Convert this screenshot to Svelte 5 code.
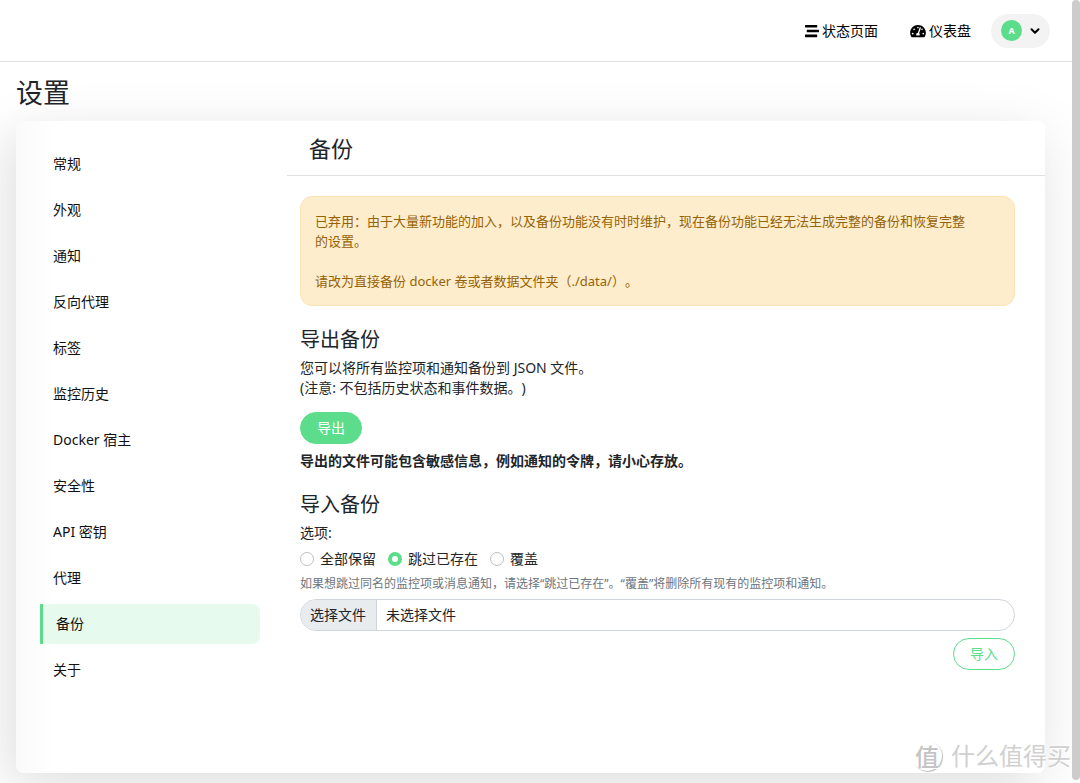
<script lang="ts">
	const menus = [
		'常规',
		'外观',
		'通知',
		'反向代理',
		'标签',
		'监控历史',
		'Docker 宿主',
		'安全性',
		'API 密钥',
		'代理',
		'备份',
		'关于'
	];

	const importModes = [
		{ value: 'keep', label: '全部保留' },
		{ value: 'skip', label: '跳过已存在' },
		{ value: 'overwrite', label: '覆盖' }
	];

	let current = $state('备份');
	let importHandle = $state('skip');
	let fileName = $state('');

	function handleFile(event: Event) {
		const input = event.target as HTMLInputElement;
		fileName = input.files?.[0]?.name ?? '';
	}
</script>

<div class="page">
	<header class="topbar">
		<a class="nav-link" href="#status">
			<svg width="14" height="14" viewBox="0 0 512 512" fill="currentColor" aria-hidden="true">
				<path
					d="M16 128h416c8.84 0 16-7.16 16-16V48c0-8.84-7.16-16-16-16H16C7.16 32 0 39.16 0 48v64c0 8.84 7.16 16 16 16zm480 80H80c-8.84 0-16 7.16-16 16v64c0 8.84 7.16 16 16 16h416c8.84 0 16-7.16 16-16v-64c0-8.84-7.16-16-16-16zm-64 176H16c-8.84 0-16 7.16-16 16v64c0 8.84 7.16 16 16 16h416c8.84 0 16-7.16 16-16v-64c0-8.84-7.16-16-16-16z"
				/>
			</svg>
			状态页面
		</a>
		<a class="nav-link" href="#dashboard">
			<svg width="16" height="14" viewBox="0 0 576 512" fill="currentColor" aria-hidden="true">
				<path
					d="M288 32C128.94 32 0 160.94 0 320c0 52.8 14.25 102.26 39.06 144.8 5.61 9.62 16.3 15.2 27.44 15.2h443c11.14 0 21.83-5.58 27.44-15.2C561.75 422.26 576 372.8 576 320c0-159.06-128.94-288-288-288zm0 64c14.71 0 26.58 10.13 30.32 23.65-1.11 2.26-2.64 4.23-3.45 6.67l-9.22 27.67c-5.13 3.49-10.97 6.01-17.64 6.01-17.67 0-32-14.33-32-32S270.33 96 288 96zM96 384c-17.67 0-32-14.33-32-32s14.33-32 32-32 32 14.33 32 32-14.33 32-32 32zm48-160c-17.67 0-32-14.33-32-32s14.33-32 32-32 32 14.33 32 32-14.33 32-32 32zm246.77-72.41l-61.33 184C343.13 347.33 352 364.54 352 384c0 11.72-3.38 22.55-8.88 32H232.88c-5.5-9.45-8.88-20.28-8.88-32 0-33.94 26.5-61.43 59.9-63.59l61.34-184.01c4.17-12.56 17.73-19.45 30.36-15.17 12.57 4.19 19.35 17.79 15.17 30.36zm14.66 57.2l15.52-46.55c3.47-1.29 7.13-2.23 11.05-2.23 17.67 0 32 14.33 32 32s-14.33 32-32 32c-11.38-.01-20.89-6.28-26.57-15.22zM480 384c-17.67 0-32-14.33-32-32s14.33-32 32-32 32 14.33 32 32-14.33 32-32 32z"
				/>
			</svg>
			仪表盘
		</a>
		<button type="button" class="profile">
			<span class="avatar">A</span>
			<svg class="chevron" width="10" height="10" viewBox="0 0 10 10" aria-hidden="true">
				<path d="M1.5 3.2 5 6.7 8.5 3.2" fill="none" stroke="currentColor" stroke-width="2" stroke-linecap="round" stroke-linejoin="round" />
			</svg>
		</button>
	</header>

	<main class="main">
		<h1>设置</h1>

		<div class="shadow-box">
			<nav class="menu">
				{#each menus as menu}
					<a
						href="#{menu}"
						class="menu-item"
						class:active={menu === current}
						onclick={() => (current = menu)}
					>
						{menu}
					</a>
				{/each}
			</nav>

			<section class="content">
				<h2 class="content-title">备份</h2>

				<div class="content-body">
					<div class="alert" role="alert">
						已弃用：由于大量新功能的加入，以及备份功能没有时时维护，现在备份功能已经无法生成完整的备份和恢复完整的设置。<br />
						<br />
						请改为直接备份 docker 卷或者数据文件夹（./data/）。
					</div>

					<h3>导出备份</h3>
					<p>
						您可以将所有监控项和通知备份到 JSON 文件。<br />
						(注意: 不包括历史状态和事件数据。)
					</p>
					<button type="button" class="btn btn-primary">导出</button>
					<p class="note"><strong>导出的文件可能包含敏感信息，例如通知的令牌，请小心存放。</strong></p>

					<h3>导入备份</h3>
					<fieldset>
						<legend>选项:</legend>
						<div class="radios">
							{#each importModes as mode}
								<label class="radio">
									<input type="radio" name="import-handle" value={mode.value} bind:group={importHandle} />
									{mode.label}
								</label>
							{/each}
						</div>
					</fieldset>
					<p class="form-text">
						如果想跳过同名的监控项或消息通知，请选择“跳过已存在”。“覆盖”将删除所有现有的监控项和通知。
					</p>
					<label class="file">
						<input type="file" accept="application/json" onchange={handleFile} />
						<span class="file-button">选择文件</span>
						<span class="file-name">{fileName || '未选择文件'}</span>
					</label>
					<div class="actions">
						<button type="button" class="btn btn-outline">导入</button>
					</div>
				</div>
			</section>
		</div>
	</main>

	<div class="scrollbar" aria-hidden="true"></div>
	<div class="watermark">
		<span class="watermark-logo">值</span>
		什么值得买
	</div>
</div>

<style>
	:global(body) {
		margin: 0;
		background: #fff;
	}

	.page {
		position: relative;
		display: flex;
		flex-direction: column;
		box-sizing: border-box;
		min-height: 100vh;
		padding-right: 8px;
		overflow: hidden;
		color: #212529;
		font-family: 'Noto Sans', 'Noto Sans CJK SC', sans-serif;
		font-size: 14px;
		line-height: 20px;
		text-spacing-trim: space-all;
	}

	h1,
	h2,
	h3,
	p {
		margin: 0;
		font-weight: 400;
	}

	button {
		font: inherit;
		cursor: pointer;
	}

	.topbar {
		position: relative;
		z-index: 1;
		display: flex;
		align-items: center;
		justify-content: flex-end;
		height: 61px;
		padding-right: 22px;
		border-bottom: 1px solid #dee2e6;
	}

	.nav-link {
		display: flex;
		align-items: center;
		gap: 3px;
		margin-right: 32px;
		color: #000;
		text-decoration: none;
	}

	.nav-link + .nav-link {
		margin-right: 20px;
	}

	.profile {
		display: flex;
		align-items: center;
		gap: 8px;
		height: 34px;
		padding: 0 10px;
		border: none;
		border-radius: 17px;
		background: #f3f3f3;
		color: #000;
	}

	.avatar {
		display: grid;
		place-items: center;
		width: 21px;
		height: 21px;
		border-radius: 50%;
		background: #5cdd8b;
		color: #fff;
		font-size: 9px;
		font-weight: 700;
	}

	.main {
		display: flex;
		flex: 1;
		flex-direction: column;
		padding: 14px 27px 10px 16px;
	}

	h1 {
		margin-bottom: 11px;
		font-size: 27px;
		line-height: 34px;
	}

	.shadow-box {
		display: grid;
		flex: 1;
		grid-template-columns: minmax(120px, 271px) minmax(0, 1fr);
		border-radius: 8px;
		background: linear-gradient(90deg, #fafafa, #fff 40px);
		box-shadow:
			0 13px 60px rgba(0, 0, 0, 0.1),
			-20px 12px 40px rgba(0, 0, 0, 0.04);
	}

	.menu {
		display: flex;
		flex-direction: column;
		gap: 6px;
		padding: 23px 27px 24px 24px;
	}

	.menu-item {
		padding: 10px 13px;
		color: #111;
		text-decoration: none;
	}

	.menu-item.active {
		border-left: 3px solid #5cdd8b;
		border-radius: 0 8px 8px 0;
		background: #e7faee;
	}

	.content-title {
		padding: 14px 22px;
		border-bottom: 1px solid #dee2e6;
		font-size: 22px;
		line-height: 26px;
	}

	.content-body {
		padding: 20px 30px 30px 13px;
	}

	.alert {
		margin-bottom: 21px;
		padding: 14px 44px 14px 14px;
		border: 1px solid #fce3b4;
		border-radius: 12px;
		background: #feedcd;
		color: #956204;
		font-size: 13px;
	}

	h3 {
		margin-bottom: 6px;
		font-size: 20px;
		line-height: 25px;
	}

	.btn {
		height: 32px;
		padding: 0 16px;
		border: 1px solid #5cdd8b;
		border-radius: 16px;
	}

	.btn-primary {
		margin-top: 14px;
		background: #5cdd8b;
		color: #fff;
	}

	.btn-outline {
		background: transparent;
		color: #5cdd8b;
	}

	.note {
		margin: 7px 0 21px;
	}

	.note strong {
		font-weight: 700;
	}

	fieldset {
		margin: 0;
		padding: 0;
		border: none;
	}

	legend {
		padding: 0;
	}

	.radios {
		display: flex;
		flex-wrap: wrap;
		gap: 12px;
		margin-top: 6px;
	}

	.radio {
		display: flex;
		align-items: center;
		gap: 6px;
	}

	.radio input {
		width: 14px;
		height: 14px;
		margin: 0;
		border: 1px solid #bfbfbf;
		border-radius: 50%;
		background: #fff;
		appearance: none;
	}

	.radio input:checked {
		border: 4px solid #5cdd8b;
	}

	.form-text {
		margin: 5px 0;
		color: #6c757d;
		font-size: 12px;
	}

	.file {
		position: relative;
		display: flex;
		height: 30px;
		overflow: hidden;
		border: 1px solid #ced4da;
		border-radius: 16px;
		line-height: 30px;
	}

	.file input {
		position: absolute;
		inset: 0;
		width: 100%;
		opacity: 0;
	}

	.file-button {
		padding: 0 10px 0 9px;
		border-right: 1px solid #ced4da;
		background: #e9ecef;
	}

	.file-name {
		padding-left: 9px;
	}

	.actions {
		display: flex;
		justify-content: flex-end;
		margin-top: 7px;
	}

	.scrollbar {
		position: absolute;
		top: 0;
		right: 0;
		bottom: 3px;
		z-index: 2;
		width: 8px;
		border-radius: 4px;
		background: #ccc;
	}

	.watermark {
		position: absolute;
		right: 9px;
		bottom: 11px;
		z-index: 2;
		display: flex;
		align-items: center;
		gap: 9px;
		color: #d0d0d0;
		font-size: 24px;
		line-height: 32px;
		text-shadow: 1px 1px 0 #fff;
		pointer-events: none;
	}

	.watermark-logo {
		display: grid;
		place-items: center;
		width: 30px;
		height: 30px;
		border-radius: 50%;
		box-shadow: 1px 1px 1px #bbb;
		color: #c4c4c4;
		font-weight: 500;
	}
</style>
